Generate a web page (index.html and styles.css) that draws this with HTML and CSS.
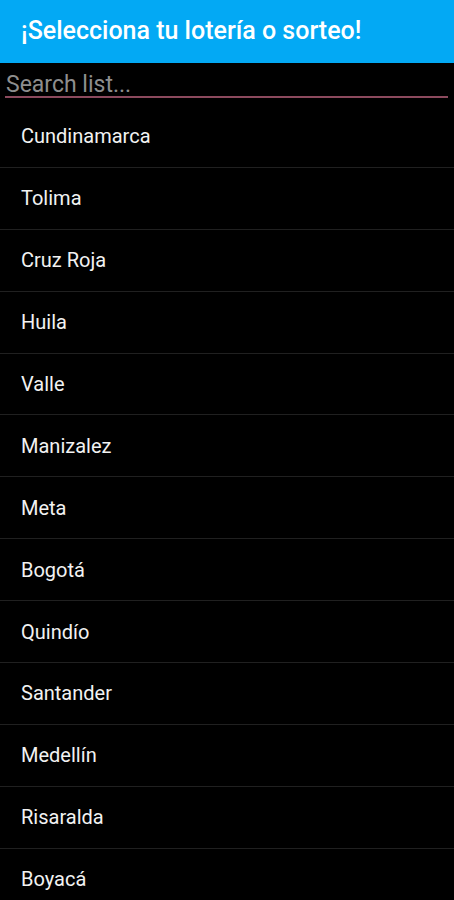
FILE: index.html
```html
<!DOCTYPE html>
<html>
    <head>
        <meta name="viewport" content="width=device-width, initial-scale=1">
        <meta charset="UTF-8">
        <title>Loterías</title>
        <link rel="stylesheet" href="styles.css">
    </head>
    <body>
        <div class="app-bar">¡Selecciona tu lotería o sorteo!</div>
        <div class="search-frame">
            <input class="search-input" type="text" placeholder="Search list...">
        </div>
        <ul class="lottery-list">
            <li>Cundinamarca</li>
            <li>Tolima</li>
            <li>Cruz Roja</li>
            <li>Huila</li>
            <li>Valle</li>
            <li>Manizalez</li>
            <li>Meta</li>
            <li>Bogotá</li>
            <li>Quindío</li>
            <li>Santander</li>
            <li>Medellín</li>
            <li>Risaralda</li>
            <li>Boyacá</li>
        </ul>
    </body>
</html>
```

FILE: styles.css
```css
html, body {
    margin: 0;
    height: 100%;
    width: 100%;
    overflow: hidden;

    background-color: #000;
    font-family: Roboto, "Liberation Sans", sans-serif;
}

.app-bar {
    height: 63px;
    box-sizing: border-box;
    padding: 0 21px 2px;

    display: flex;
    align-items: center;

    background-color: #03a9f4;
    color: white;
    font-size: 25px;
    font-weight: 500;
}

.search-frame {
    height: 43px;
    box-sizing: border-box;
    padding: 11px 6px 0 5px;
}

.search-input {
    display: block;
    width: 100%;
    box-sizing: border-box;
    height: 24px;
    padding: 0 1px;

    background: transparent;
    border: none;
    border-bottom: 2px solid #8c4a5e;
    outline: none;

    color: #ddd;
    font-family: Roboto, "Liberation Sans", sans-serif;
    font-size: 23px;
    line-height: 24px;
}

.search-input::placeholder {
    color: #8e8e8e;
}

.lottery-list {
    list-style: none;
    margin: 0;
    padding: 0;
}

.lottery-list li {
    height: 60.9px;
    padding-left: 21px;
    border-bottom: 1px solid #202020;

    display: flex;
    align-items: center;

    color: #f2f2f2;
    font-size: 20px;
}
```
